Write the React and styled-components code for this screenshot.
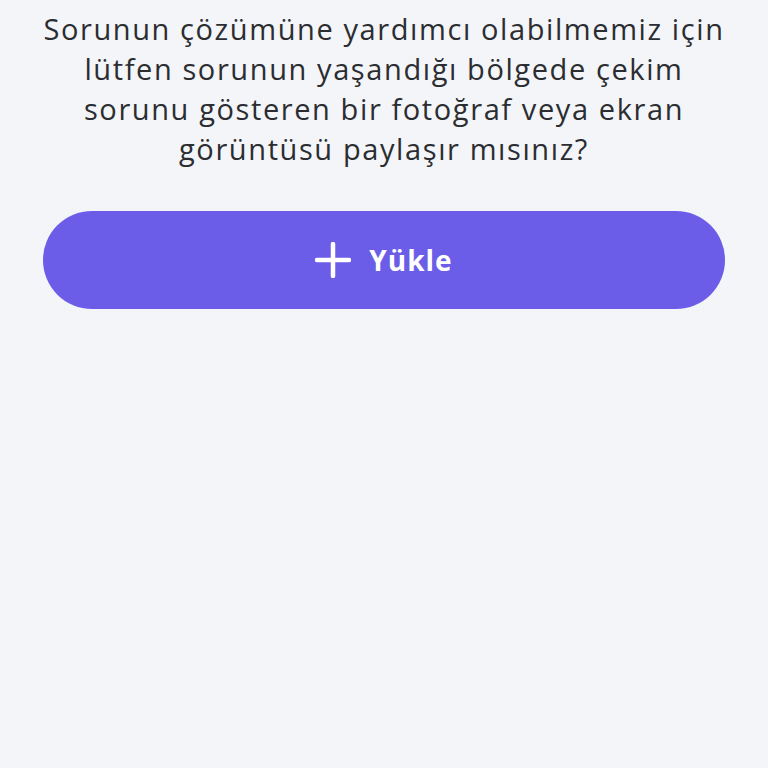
import React from "react";
import styled, { createGlobalStyle } from "styled-components";

const GlobalStyle = createGlobalStyle`
  html, body {
    margin: 0;
    padding: 0;
    background: #f3f5f9;
  }
  body {
    font-family: "Open Sans", "Noto Sans", sans-serif;
  }
`;

const Page = styled.div`
  min-height: 768px;
  box-sizing: border-box;
  padding: 9px 43px 0;
  display: flex;
  flex-direction: column;
  gap: 42px;
`;

const Question = styled.p`
  margin: 0;
  text-align: center;
  color: #2b2d31;
  font-size: 29px;
  line-height: 40px;
  letter-spacing: 1.6px;
  white-space: nowrap;
`;

const UploadButton = styled.button`
  height: 98px;
  border: none;
  border-radius: 49px;
  background: #6b5de8;
  color: #fff;
  display: flex;
  align-items: center;
  justify-content: center;
  gap: 18px;
  font-family: "Open Sans", "Noto Sans", sans-serif;
  font-size: 28px;
  font-weight: 700;
  letter-spacing: 1px;
  cursor: pointer;
`;

const PlusIcon = () => (
  <svg width="36" height="36" viewBox="0 0 36 36" fill="none">
    <path d="M18 2v32M2 18h32" stroke="#fff" strokeWidth="4.5" strokeLinecap="round" />
  </svg>
);

export default function App() {
  return (
    <>
      <GlobalStyle />
      <Page>
        <Question>
          Sorunun çözümüne yardımcı olabilmemiz için
          <br />
          lütfen sorunun yaşandığı bölgede çekim
          <br />
          sorunu gösteren bir fotoğraf veya ekran
          <br />
          görüntüsü paylaşır mısınız?
        </Question>
        <UploadButton>
          <PlusIcon />
          Yükle
        </UploadButton>
      </Page>
    </>
  );
}
